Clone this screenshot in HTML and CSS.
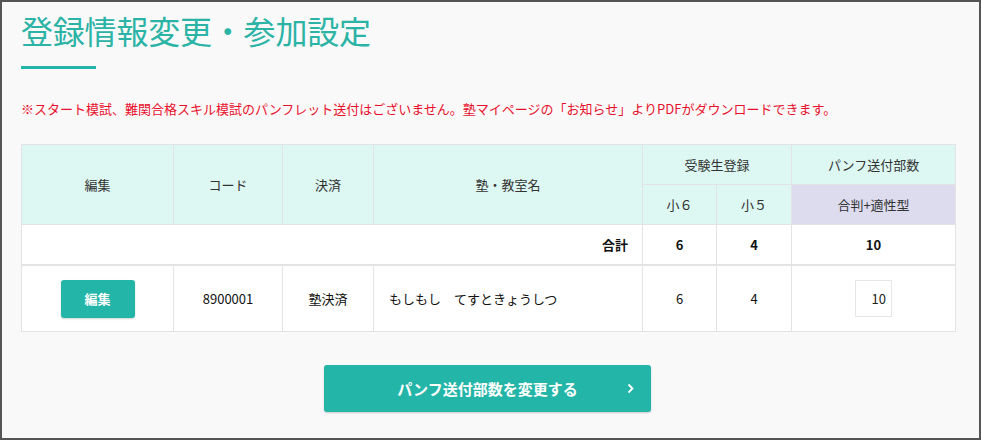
FILE: index.html
```html
<!DOCTYPE html>
<html lang="ja">

<head>
    <meta charset="UTF-8">
    <title>登録情報変更・参加設定</title>
    <link rel="stylesheet" href="styles.css">
</head>

<body>
    <div class="frame">
        <h1 class="page-title">登録情報変更・参加設定</h1>

        <p class="notice">※スタート模試、難関合格スキル模試のパンフレット送付はございません。塾マイページの「お知らせ」よりPDFがダウンロードできます。</p>

        <table class="entry-table">
            <colgroup>
                <col style="width: 152px">
                <col style="width: 109px">
                <col style="width: 91px">
                <col style="width: 269px">
                <col style="width: 74px">
                <col style="width: 75px">
                <col>
            </colgroup>
            <thead>
                <tr>
                    <th rowspan="2">編集</th>
                    <th rowspan="2">コード</th>
                    <th rowspan="2">決済</th>
                    <th rowspan="2">塾・教室名</th>
                    <th colspan="2">受験生登録</th>
                    <th>パンフ送付部数</th>
                </tr>
                <tr>
                    <th>小６</th>
                    <th>小５</th>
                    <th class="type-head">合判+適性型</th>
                </tr>
            </thead>
            <tbody>
                <tr class="total-row">
                    <td colspan="4" class="total-label">合計</td>
                    <td>6</td>
                    <td>4</td>
                    <td>10</td>
                </tr>
                <tr class="data-row">
                    <td><button class="edit-btn">編集</button></td>
                    <td>8900001</td>
                    <td>塾決済</td>
                    <td class="name-cell">もしもし　てすときょうしつ</td>
                    <td>6</td>
                    <td>4</td>
                    <td><input class="count-input" type="text" value="10"></td>
                </tr>
            </tbody>
        </table>

        <div class="actions">
            <button class="submit-btn">
                <span>パンフ送付部数を変更する</span>
                <svg class="chevron" width="7" height="11" viewBox="0 0 7 11">
                    <polyline points="1.5,1.5 5.5,5.5 1.5,9.5" fill="none" stroke="#fff" stroke-width="1.8" />
                </svg>
            </button>
        </div>
    </div>
</body>

</html>
```

FILE: styles.css
```css
html,
body {
    margin: 0;
    padding: 0;
}

body {
    font-family: "Noto Sans CJK JP", "Noto Sans", sans-serif;
    color: #222;
    background-color: #555;
}

.frame {
    box-sizing: border-box;
    width: 981px;
    height: 440px;
    border: 2px solid #555;
    background-color: #f9f9f9;
    padding: 0 23px 0 19px;
    overflow: hidden;
}

.page-title {
    margin: 0;
    padding-top: 6px;
    font-size: 32px;
    font-weight: 400;
    line-height: 44px;
    color: #2bb3a6;
    letter-spacing: -0.2px;
}

.page-title::after {
    content: "";
    display: block;
    width: 75px;
    height: 3px;
    margin-top: 14px;
    background-color: #23b5a7;
}

.notice {
    margin: 30px 0 0;
    font-size: 13px;
    line-height: 20px;
    color: #e8112d;
}

.entry-table {
    margin-top: 25px;
    width: 935px;
    table-layout: fixed;
    border-collapse: collapse;
    font-size: 13px;
    background-color: #fff;
}

.entry-table th,
.entry-table td {
    border: 1px solid #e3e3e3;
    text-align: center;
    padding: 0;
}

.entry-table th {
    background-color: #ddf7f2;
    font-weight: 400;
    color: #333;
    height: 39px;
}

.entry-table th.type-head {
    background-color: #dcdcee;
}

.total-row td {
    height: 39px;
    font-weight: 700;
    color: #111;
    border-bottom-width: 2px;
}

.total-row .total-label {
    text-align: right;
    padding-right: 14px;
}

.data-row td {
    height: 65px;
    color: #111;
}

.data-row .name-cell {
    text-align: left;
    padding-left: 15px;
}

.edit-btn {
    width: 74px;
    height: 38px;
    border: none;
    border-radius: 3px;
    background-color: #23b5a7;
    color: #fff;
    font-family: inherit;
    font-size: 13px;
    font-weight: 700;
    box-shadow: 0 1px 2px rgba(0, 0, 0, 0.18);
    cursor: pointer;
    vertical-align: middle;
}

.count-input {
    box-sizing: border-box;
    width: 37px;
    height: 37px;
    border: 1px solid #e6e6e6;
    padding: 0 5px 0 0;
    text-align: right;
    font-family: inherit;
    font-size: 13px;
    color: #222;
    vertical-align: middle;
}

.actions {
    display: flex;
    justify-content: center;
    margin-top: 33px;
    padding-right: 2px;
}

.submit-btn {
    position: relative;
    width: 327px;
    height: 47px;
    border: none;
    border-radius: 3px;
    background-color: #23b5a7;
    color: #fff;
    font-family: inherit;
    font-size: 15px;
    font-weight: 700;
    box-shadow: 0 1px 2px rgba(0, 0, 0, 0.2);
    cursor: pointer;
}

.submit-btn .chevron {
    position: absolute;
    right: 17px;
    top: 18px;
}
```
